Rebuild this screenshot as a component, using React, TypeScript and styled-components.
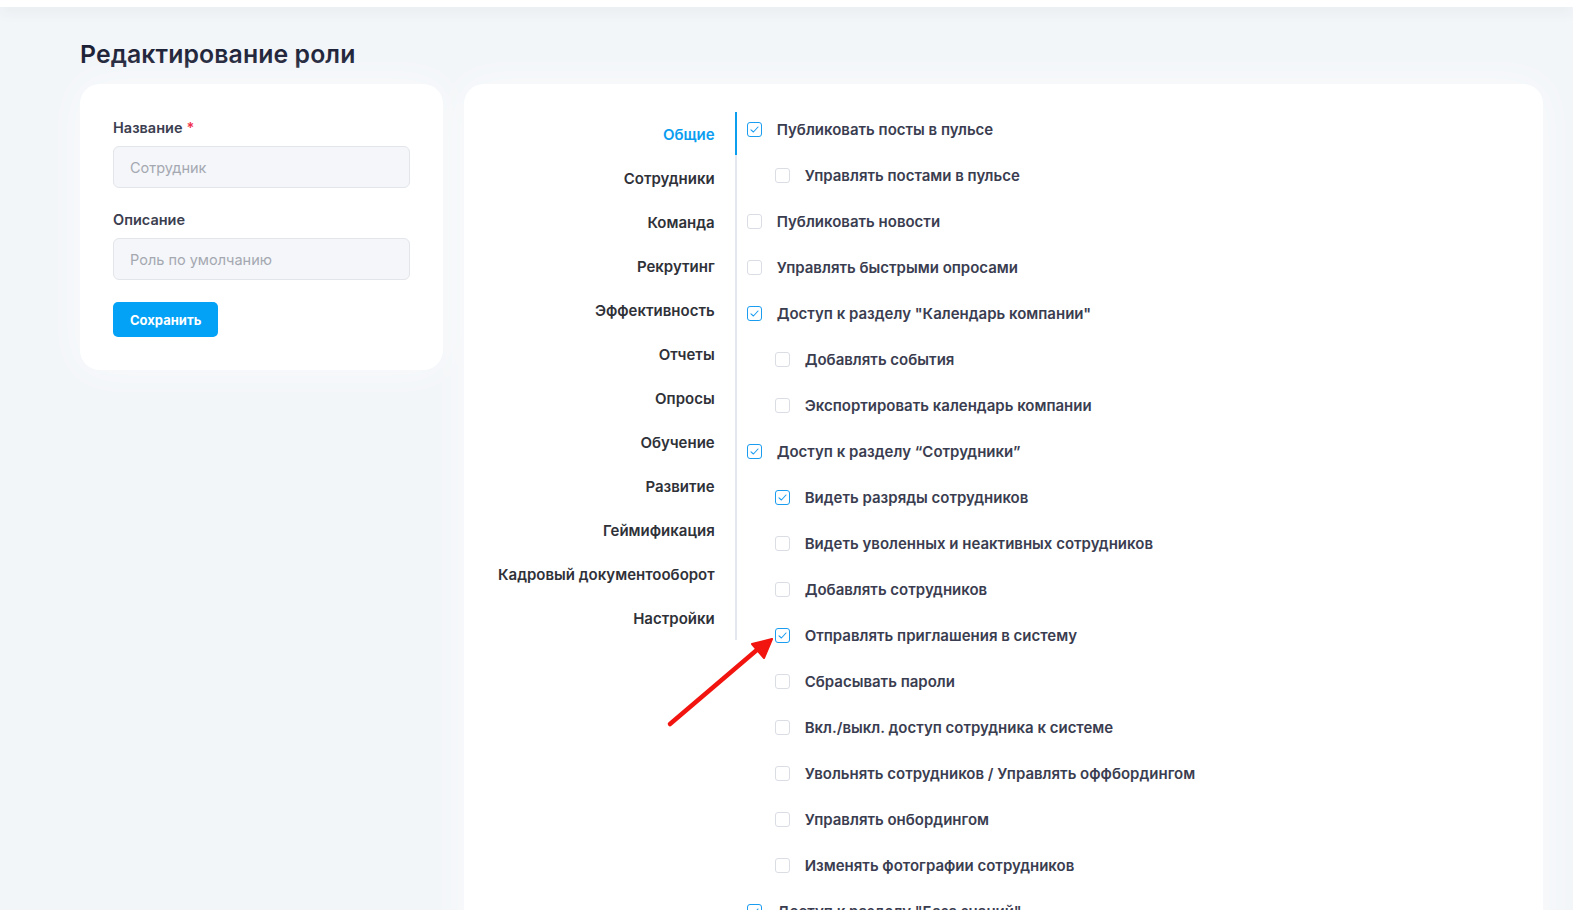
import styled, { createGlobalStyle } from 'styled-components'

const GlobalStyle = createGlobalStyle`
  html, body {
    margin: 0;
    padding: 0;
    height: 910px;
    overflow: hidden;
    background: #f3f6f9;
    font-family: Inter, "Noto Sans", "Liberation Sans", sans-serif;
  }
  * { box-sizing: border-box; }
`

const TopBar = styled.header`
  height: 7px;
  background: #fff;
  box-shadow: 0 4px 14px rgba(30, 45, 70, .08);
  position: relative;
  z-index: 1;
`

const Page = styled.main`
  position: relative;
  padding: 31px 30px 0 80px;
`

const Title = styled.h1`
  margin: 0 0 14px;
  font-size: 24.8px;
  line-height: 32px;
  font-weight: 600;
  color: #1b1f36;
  letter-spacing: .1px;
`

const Columns = styled.div`
  display: flex;
  align-items: flex-start;
  gap: 21px;
`

const Card = styled.section`
  background: #fff;
  border-radius: 20px;
  box-shadow: 0 0 40px rgba(255, 255, 255, .6);
`

const FormCard = styled(Card)`
  width: 363px;
  padding: 34px 33px 33px;
`

const Label = styled.label`
  display: block;
  font-size: 14.5px;
  line-height: 20px;
  font-weight: 600;
  color: #3b3e4f;
  margin-bottom: 8px;

  span {
    color: #f0304a;
    margin-left: 4px;
  }
`

const Input = styled.input`
  display: block;
  width: 100%;
  height: 42px;
  padding: 0 16px;
  border: 1px solid #e2e5ea;
  border-radius: 6px;
  background: #f4f6f9;
  font: inherit;
  font-size: 14.5px;
  color: #3b3e4f;
  margin-bottom: 22px;
  outline: none;

  &::placeholder {
    color: #a4a8b1;
  }
`

const SaveButton = styled.button`
  height: 35px;
  padding: 0 17px;
  border: none;
  border-radius: 5px;
  background: #03a2f6;
  color: #fff;
  font: inherit;
  font-size: 13px;
  font-weight: 700;
  cursor: pointer;
`

const RightsCard = styled(Card)`
  flex: 1;
  min-height: 900px;
  display: flex;
  align-items: flex-start;
  padding: 28px 0 0 34px;
`

const Nav = styled.nav`
  display: flex;
  flex-direction: column;
  align-items: flex-end;
  padding-right: 20px;
`

const NavItem = styled.div<{ $active?: boolean }>`
  height: 44px;
  display: flex;
  align-items: center;
  font-size: 15px;
  font-weight: 600;
  color: ${p => (p.$active ? '#0b9df0' : '#2f3138')};
  white-space: nowrap;
`

const Divider = styled.div`
  position: relative;
  width: 2px;
  height: 528px;
  background: #e4e7ee;

  &::before {
    content: '';
    position: absolute;
    left: 0;
    top: 0;
    width: 2px;
    height: 43px;
    background: #0b9df0;
  }
`

const List = styled.ul`
  list-style: none;
  margin: -6px 0 0;
  padding: 0 0 0 10px;
`

const Row = styled.li<{ $nested?: boolean }>`
  height: 46px;
  display: flex;
  align-items: center;
  gap: 15px;
  padding-left: ${p => (p.$nested ? '28px' : '0')};
  font-size: 15px;
  font-weight: 600;
  color: #3a3d50;
  white-space: nowrap;
`

const Box = styled.span<{ $checked?: boolean }>`
  flex: none;
  width: 15px;
  height: 15px;
  border-radius: 3px;
  border: 1px solid ${p => (p.$checked ? '#1a9cf0' : '#dadde4')};
  background: #fff;
  display: flex;
  align-items: center;
  justify-content: center;
`

const Pointer = styled.svg`
  position: absolute;
  left: 660px;
  top: 620px;
  pointer-events: none;
`

type Perm = { text: string; nested?: boolean; checked?: boolean }

const sections = [
  'Общие',
  'Сотрудники',
  'Команда',
  'Рекрутинг',
  'Эффективность',
  'Отчеты',
  'Опросы',
  'Обучение',
  'Развитие',
  'Геймификация',
  'Кадровый документооборот',
  'Настройки',
]

const perms: Perm[] = [
  { text: 'Публиковать посты в пульсе', checked: true },
  { text: 'Управлять постами в пульсе', nested: true },
  { text: 'Публиковать новости' },
  { text: 'Управлять быстрыми опросами' },
  { text: 'Доступ к разделу "Календарь компании"', checked: true },
  { text: 'Добавлять события', nested: true },
  { text: 'Экспортировать календарь компании', nested: true },
  { text: 'Доступ к разделу “Сотрудники”', checked: true },
  { text: 'Видеть разряды сотрудников', nested: true, checked: true },
  { text: 'Видеть уволенных и неактивных сотрудников', nested: true },
  { text: 'Добавлять сотрудников', nested: true },
  { text: 'Отправлять приглашения в систему', nested: true, checked: true },
  { text: 'Сбрасывать пароли', nested: true },
  { text: 'Вкл./выкл. доступ сотрудника к системе', nested: true },
  { text: 'Увольнять сотрудников / Управлять оффбордингом', nested: true },
  { text: 'Управлять онбордингом', nested: true },
  { text: 'Изменять фотографии сотрудников', nested: true },
  { text: 'Доступ к разделу "База знаний"', checked: true },
]

function Checkbox({ checked }: { checked?: boolean }) {
  return (
    <Box $checked={checked}>
      {checked && (
        <svg width="11" height="11" viewBox="0 0 11 11">
          <polyline points="2,5.8 4.4,8 9,3" fill="none" stroke="#1a9cf0" strokeWidth="1.1" strokeLinecap="round" strokeLinejoin="round" />
        </svg>
      )}
    </Box>
  )
}

export default function App() {
  return (
    <>
      <GlobalStyle />
      <TopBar />
      <Page>
        <Title>Редактирование роли</Title>
        <Columns>
          <FormCard>
            <Label>Название<span>*</span></Label>
            <Input placeholder="Сотрудник" />
            <Label>Описание</Label>
            <Input placeholder="Роль по умолчанию" />
            <SaveButton>Сохранить</SaveButton>
          </FormCard>

          <RightsCard>
            <Nav>
              {sections.map((s, i) => (
                <NavItem key={s} $active={i === 0}>{s}</NavItem>
              ))}
            </Nav>
            <Divider />
            <List>
              {perms.map(p => (
                <Row key={p.text} $nested={p.nested}>
                  <Checkbox checked={p.checked} />
                  {p.text}
                </Row>
              ))}
            </List>
          </RightsCard>
        </Columns>

        <Pointer width="130" height="110" viewBox="0 0 130 110">
          <line x1="10" y1="97" x2="98" y2="22" stroke="#f2140f" strokeWidth="4.5" strokeLinecap="round" />
          <polygon points="112,12 92,17 104,31" fill="#f2140f" stroke="#f2140f" strokeWidth="2" strokeLinejoin="round" />
        </Pointer>
      </Page>
    </>
  )
}
